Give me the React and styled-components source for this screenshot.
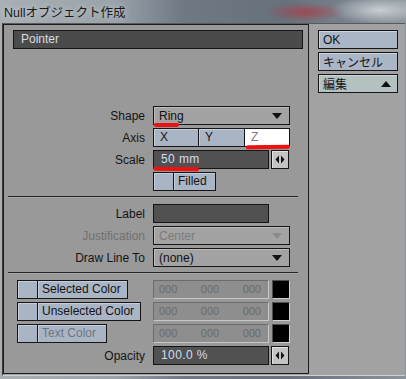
import React from 'react'
import styled, { createGlobalStyle } from 'styled-components'

const GlobalStyle = createGlobalStyle`
  html, body {
    margin: 0;
    padding: 0;
  }
  body {
    width: 406px;
    height: 379px;
    overflow: hidden;
    font-family: "Liberation Sans", Arial, sans-serif;
    background:
      radial-gradient(ellipse 40px 10px at 305px 12px, rgba(170, 60, 70, 0.75), rgba(170, 60, 70, 0) 100%),
      radial-gradient(ellipse 50px 14px at 380px 10px, rgba(220, 222, 226, 0.8), rgba(220, 222, 226, 0) 100%),
      linear-gradient(90deg, #a8afb5 0%, #9aa3aa 28%, #6e7984 45%, #66717c 70%, #8b939b 100%);
  }
`

const Window = styled.div`
  width: 406px;
  height: 379px;
  display: flex;
  flex-direction: column;
`

const TitleBar = styled.div`
  height: 23px;
  padding-left: 4px;
  display: flex;
  align-items: center;
  font-family: "Liberation Sans", "Noto Sans CJK JP", sans-serif;
  font-size: 12.5px;
  color: #1a1a1a;
  text-shadow: 0 0 6px rgba(255, 255, 255, 0.6);
`

const Client = styled.div`
  flex: 1;
  margin: 0 1px 3px 2px;
  background: #a2a2a2;
  display: flex;
  border-left: 1px solid #3a3a3a;
  border-top: 1px solid #5a5a5a;
  border-bottom: 1px solid #cfcfcf;
`

const Panel = styled.div`
  width: 304px;
  height: 348px;
  border: 1px solid #1c1c1c;
  background: #999999;
  display: flex;
  flex-direction: column;
`

const NameField = styled.div`
  margin: 5px 0 0 9px;
  width: 281px;
  height: 17px;
  border: 1px solid #141414;
  background: #4b4b4b;
  color: #d8dce4;
  font-size: 12px;
  line-height: 17px;
  padding-left: 7px;
`

const Section = styled.div`
  display: flex;
  flex-direction: column;
  gap: 3px;
  margin-top: ${p => p.$top}px;
`

const Row = styled.div`
  display: grid;
  grid-template-columns: 141px auto;
  column-gap: 8px;
  align-items: center;
  height: 19px;
`

const Label = styled.div`
  text-align: right;
  font-size: 12px;
  color: ${p => (p.$disabled ? '#707070' : '#141414')};
`

const Controls = styled.div`
  display: flex;
  align-items: center;
  gap: ${p => p.$gap ?? 0}px;
`

const Dropdown = styled.div`
  position: relative;
  box-sizing: border-box;
  width: 137px;
  height: 19px;
  border: 1px solid #151515;
  background: #a3a3a3;
  box-shadow: inset 1px 1px 0 #bdbdbd;
  display: flex;
  align-items: center;
  justify-content: space-between;
  padding: 0 4px 0 5px;
  font-size: 12px;
  color: ${p => (p.$disabled ? '#7a7a7a' : '#111')};
`

const Tri = styled.span`
  width: 0;
  height: 0;
  border-left: 5px solid transparent;
  border-right: 5px solid transparent;
  border-top: 6px solid ${p => (p.$disabled ? '#8a8a8a' : '#111')};
  margin-right: 3px;
`

const UpTri = styled.span`
  width: 0;
  height: 0;
  border-left: 5px solid transparent;
  border-right: 5px solid transparent;
  border-bottom: 6px solid #111;
  margin-right: 6px;
`

const AxisButton = styled.div`
  position: relative;
  box-sizing: border-box;
  width: ${p => p.$w}px;
  height: 19px;
  margin-left: ${p => (p.$first ? 0 : -1)}px;
  border: 1px solid #151515;
  background: ${p => (p.$on ? '#ffffff' : '#a9b5c5')};
  box-shadow: ${p => (p.$on ? 'none' : 'inset 1px 1px 0 #c6d0dc')};
  color: ${p => (p.$on ? '#7a7a7a' : '#151515')};
  font-size: 12px;
  line-height: 17px;
  padding-left: 6px;
`

const ValueField = styled.div`
  position: relative;
  box-sizing: border-box;
  width: 116px;
  height: 19px;
  border: 1px solid #151515;
  background: #515151;
  color: #d2dcf0;
  font-size: 12px;
  line-height: 17px;
  padding-left: 7px;
  letter-spacing: 0.4px;
`

const ArrowButton = styled.div`
  box-sizing: border-box;
  width: 18px;
  height: 19px;
  border: 1px solid #151515;
  background: #c4c4c4;
  box-shadow: inset 1px 1px 0 #e2e2e2;
  display: flex;
  align-items: center;
  justify-content: center;
`

const CheckButton = styled.div`
  display: flex;
  height: 19px;
`

const CheckBox = styled.div`
  box-sizing: border-box;
  width: 21px;
  height: 19px;
  border: 1px solid #151515;
  background: #a9b5c5;
  box-shadow: inset 1px 1px 0 #c6d0dc;
`

const CheckLabel = styled.div`
  box-sizing: border-box;
  width: ${p => p.$w}px;
  height: 19px;
  margin-left: -1px;
  border: 1px solid #151515;
  background: #a9b5c5;
  box-shadow: inset 1px 1px 0 #c6d0dc;
  font-size: 12px;
  line-height: 17px;
  padding-left: 4px;
  color: ${p => (p.$disabled ? '#6f7680' : '#141414')};
`

const Divider = styled.div`
  margin: ${p => p.$top}px 0 0 4px;
  width: 290px;
  height: 1px;
  background: #262626;
  border-bottom: 1px solid #a8a8a8;
`

const ColorRow = styled.div`
  display: grid;
  grid-template-columns: 128px auto;
  column-gap: 8px;
  align-items: center;
  height: 19px;
  padding-left: 13px;
`

const RGBField = styled.div`
  box-sizing: border-box;
  width: 116px;
  height: 19px;
  border: 1px solid #6c6c6c;
  border-right-color: #c8c8c8;
  border-bottom-color: #c8c8c8;
  background: #8e8e8e;
  display: flex;
  justify-content: space-between;
  padding: 0 7px 0 5px;
  font-size: 11px;
  line-height: 17px;
  color: #6a6a6a;
`

const Swatch = styled.div`
  box-sizing: border-box;
  width: 18px;
  height: 19px;
  background: #000;
  border: 1px solid #cfcfcf;
  border-top-color: #505050;
  border-left-color: #505050;
`

const Mark = styled.span`
  position: absolute;
  left: ${p => p.$l}px;
  top: ${p => p.$t}px;
  width: ${p => p.$w}px;
  height: 4px;
  border-radius: 3px;
  background: #ee1111;
  transform: rotate(${p => p.$r ?? 0}deg);
`

const Side = styled.div`
  display: flex;
  flex-direction: column;
  gap: 3px;
  padding: 6px 0 0 9px;
`

const SideButton = styled.div`
  box-sizing: border-box;
  width: 80px;
  height: 19px;
  border: 1px solid #151515;
  background: ${p => (p.$alt ? '#b3c1c1' : '#aab5c6')};
  box-shadow: inset 1px 1px 0 #cdd5e0;
  display: flex;
  align-items: center;
  justify-content: space-between;
  padding-left: 4px;
  font-family: "Liberation Sans", "Noto Sans CJK JP", sans-serif;
  font-size: 12px;
  color: #141414;
`

const LeftRight = () => (
  <svg width="10" height="9" viewBox="0 0 10 9">
    <path d="M4 0.5 L0.5 4.5 L4 8.5 Z M6 0.5 L9.5 4.5 L6 8.5 Z" fill="#111" />
  </svg>
)

const colorRows = [
  { name: 'Selected Color', w: 91 },
  { name: 'Unselected Color', w: 104 },
  { name: 'Text Color', w: 70, disabled: true },
]

const App = () => {
  return (
    <>
      <GlobalStyle />
      <Window>
        <TitleBar>Nullオブジェクト作成</TitleBar>
        <Client>
          <Panel>
            <NameField>Pointer</NameField>

            <Section $top={57}>
              <Row>
                <Label>Shape</Label>
                <Controls>
                  <Dropdown>
                    Ring
                    <Tri />
                    <Mark $l={0} $t={16} $w={25} />
                  </Dropdown>
                </Controls>
              </Row>
              <Row>
                <Label>Axis</Label>
                <Controls>
                  <AxisButton $first $w={46}>X</AxisButton>
                  <AxisButton $w={47}>Y</AxisButton>
                  <AxisButton $w={46} $on>
                    Z
                    <Mark $l={1} $t={16} $w={44} $r={-1} />
                  </AxisButton>
                </Controls>
              </Row>
              <Row>
                <Label>Scale</Label>
                <Controls $gap={2}>
                  <ValueField>
                    50 mm
                    <Mark $l={-1} $t={16} $w={46} $r={1} />
                  </ValueField>
                  <ArrowButton>
                    <LeftRight />
                  </ArrowButton>
                </Controls>
              </Row>
              <Row>
                <span />
                <CheckButton>
                  <CheckBox />
                  <CheckLabel $w={43}>Filled</CheckLabel>
                </CheckButton>
              </Row>
            </Section>

            <Divider $top={5} />

            <Section $top={6}>
              <Row>
                <Label>Label</Label>
                <Controls>
                  <ValueField />
                </Controls>
              </Row>
              <Row>
                <Label $disabled>Justification</Label>
                <Controls>
                  <Dropdown $disabled>
                    Center
                    <Tri $disabled />
                  </Dropdown>
                </Controls>
              </Row>
              <Row>
                <Label>Draw Line To</Label>
                <Controls>
                  <Dropdown>
                    (none)
                    <Tri />
                  </Dropdown>
                </Controls>
              </Row>
            </Section>

            <Divider $top={5} />

            <Section $top={6}>
              {colorRows.map(c => (
                <ColorRow key={c.name}>
                  <CheckButton>
                    <CheckBox />
                    <CheckLabel $w={c.w} $disabled={c.disabled}>{c.name}</CheckLabel>
                  </CheckButton>
                  <Controls $gap={3}>
                    <RGBField>
                      <span>000</span>
                      <span>000</span>
                      <span>000</span>
                    </RGBField>
                    <Swatch />
                  </Controls>
                </ColorRow>
              ))}
              <Row>
                <Label>Opacity</Label>
                <Controls $gap={2}>
                  <ValueField>100.0 %</ValueField>
                  <ArrowButton>
                    <LeftRight />
                  </ArrowButton>
                </Controls>
              </Row>
            </Section>
          </Panel>

          <Side>
            <SideButton>OK</SideButton>
            <SideButton>キャンセル</SideButton>
            <SideButton $alt>
              編集
              <UpTri />
            </SideButton>
          </Side>
        </Client>
      </Window>
    </>
  )
}

export default App
